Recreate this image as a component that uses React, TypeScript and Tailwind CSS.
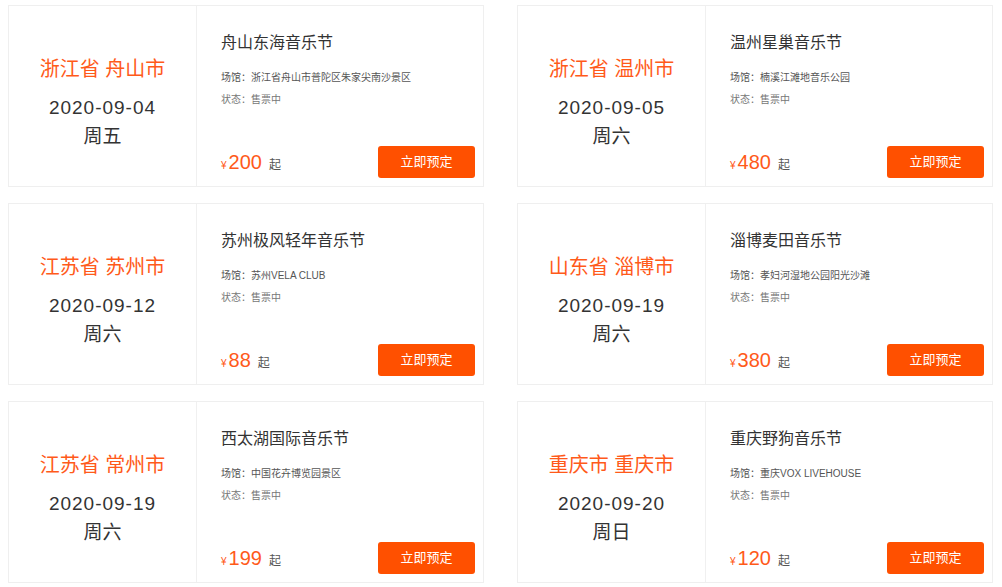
import React from 'react';

interface Festival {
  place: string;
  date: string;
  weekday: string;
  name: string;
  venue: string;
  price: number;
}

const festivals: Festival[] = [
  { place: '浙江省 舟山市', date: '2020-09-04', weekday: '周五', name: '舟山东海音乐节', venue: '浙江省舟山市普陀区朱家尖南沙景区', price: 200 },
  { place: '浙江省 温州市', date: '2020-09-05', weekday: '周六', name: '温州星巢音乐节', venue: '楠溪江滩地音乐公园', price: 480 },
  { place: '江苏省 苏州市', date: '2020-09-12', weekday: '周六', name: '苏州极风轻年音乐节', venue: '苏州VELA CLUB', price: 88 },
  { place: '山东省 淄博市', date: '2020-09-19', weekday: '周六', name: '淄博麦田音乐节', venue: '孝妇河湿地公园阳光沙滩', price: 380 },
  { place: '江苏省 常州市', date: '2020-09-19', weekday: '周六', name: '西太湖国际音乐节', venue: '中国花卉博览园景区', price: 199 },
  { place: '重庆市 重庆市', date: '2020-09-20', weekday: '周日', name: '重庆野狗音乐节', venue: '重庆VOX LIVEHOUSE', price: 120 },
];

function FestivalCard({ item }: { item: Festival }) {
  return (
    <div className="flex h-[182px] border border-[#efefef] bg-white">
      {/* date column */}
      <div className="flex w-[188px] shrink-0 flex-col items-center border-r border-[#f0f0f0] pt-[49px]">
        <div className="text-[20px] leading-[29px] text-[#ff5a1a]">{item.place}</div>
        <div className="mt-[9px] text-[19px] leading-[29px] tracking-[1px] text-[#333]">{item.date}</div>
        <div className="text-[19px] leading-[29px] text-[#333]">{item.weekday}</div>
      </div>

      {/* info column */}
      <div className="flex flex-1 flex-col pl-[24px] pr-[8px] pt-[25px] pb-[8px]">
        <div className="text-[16px] leading-[24px] text-[#333]">{item.name}</div>
        <div className="mt-[15px] text-[10px] leading-[16px] text-[#555]">场馆：{item.venue}</div>
        <div className="mt-[6px] text-[10px] leading-[16px] text-[#777]">状态：售票中</div>
        <div className="mt-auto flex items-center justify-between">
          <div className="flex items-baseline pt-[2px]">
            <span className="text-[10px] text-[#ff5a1a]">¥</span>
            <span className="ml-[2px] text-[20px] leading-none text-[#ff5a1a]">{item.price}</span>
            <span className="ml-[7px] text-[12px] text-[#555]">起</span>
          </div>
          <button className="h-[32px] w-[97px] rounded-[3px] bg-[#ff5000] text-[13px] text-white">
            立即预定
          </button>
        </div>
      </div>
    </div>
  );
}

export default function App() {
  return (
    <div
      className="min-h-[587px] bg-white pl-[8px] pr-[9px] pt-[5px]"
      style={{ fontFamily: '"Liberation Sans", "Noto Sans CJK SC", sans-serif' }}
    >
      <div className="grid grid-cols-[476px_476px] gap-x-[33px] gap-y-[16px]">
        {festivals.map((item) => (
          <FestivalCard key={item.name} item={item} />
        ))}
      </div>
    </div>
  );
}
